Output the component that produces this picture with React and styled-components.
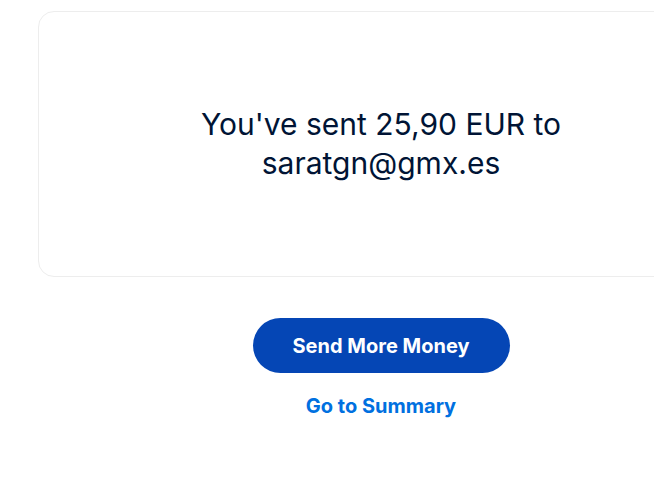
import React from "react";
import styled, { createGlobalStyle } from "styled-components";

const GlobalStyle = createGlobalStyle`
  html, body {
    margin: 0;
    padding: 0;
    background: #ffffff;
    overflow: hidden;
  }
  body {
    font-family: Inter, "Noto Sans", Arial, sans-serif;
    -webkit-font-smoothing: antialiased;
  }
`;

const Page = styled.main`
  padding: 11px 0 0 38px;
  overflow: hidden;
`;

const Column = styled.div`
  width: 686px;
  display: flex;
  flex-direction: column;
  align-items: center;
`;

const Card = styled.section`
  box-sizing: border-box;
  width: 100%;
  height: 266px;
  border: 1px solid #ededed;
  border-radius: 16px;
  display: flex;
  align-items: center;
  justify-content: center;
`;

const Message = styled.h1`
  margin: 0;
  max-width: 400px;
  font-size: 30px;
  font-weight: 400;
  line-height: 39px;
  color: #001435;
  text-align: center;
`;

const Actions = styled.div`
  margin-top: 41px;
  display: flex;
  flex-direction: column;
  align-items: center;
  gap: 21px;
`;

const PrimaryButton = styled.button`
  width: 257px;
  height: 55px;
  border: none;
  border-radius: 28px;
  background: #0546b5;
  color: #ffffff;
  font-family: inherit;
  font-size: 20px;
  font-weight: 700;
  cursor: pointer;
`;

const TextLink = styled.a`
  color: #0070e0;
  font-size: 20px;
  font-weight: 700;
  line-height: 24px;
  text-decoration: none;
  cursor: pointer;
`;

export default function App() {
  return (
    <>
      <GlobalStyle />
      <Page>
        <Column>
          <Card>
            <Message>You've sent 25,90 EUR to saratgn@gmx.es</Message>
          </Card>
          <Actions>
            <PrimaryButton>Send More Money</PrimaryButton>
            <TextLink href="#">Go to Summary</TextLink>
          </Actions>
        </Column>
      </Page>
    </>
  );
}
